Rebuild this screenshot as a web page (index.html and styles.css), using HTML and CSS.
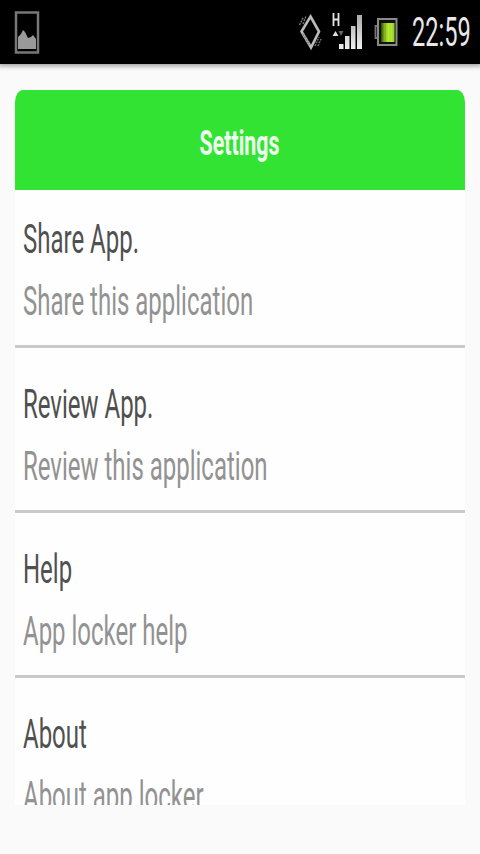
FILE: index.html
```html
<!DOCTYPE html>
<html lang="en">
<head>
<meta charset="utf-8">
<title>Settings</title>
<link rel="stylesheet" href="styles.css">
</head>
<body>
<header class="status">
  <svg class="shot" width="26" height="44" viewBox="0 0 26 44">
    <rect x="2" y="2.500" width="22" height="40" fill="#000" stroke="#777" stroke-width="2.500"/>
    <path d="M4 39V27l3-3 2-4 2 2 3 6 3-1 2-2 3 4v10z" fill="#999"/>
  </svg>
  <svg class="signals" width="112" height="44" viewBox="294 10 112 44">
    <defs>
      <linearGradient id="bar" x2="0" y2="1"><stop offset="0" stop-color="#aaa"/><stop offset="1" stop-color="#f0f0f0"/></linearGradient>
      <linearGradient id="charge"><stop offset="0" stop-color="#2c450c"/><stop offset=".3" stop-color="#91c71b"/><stop offset=".65" stop-color="#c0f53e"/><stop offset="1" stop-color="#8fc81e"/></linearGradient>
    </defs>
    <path d="M310.500 16.500l8.500 15-8 16-9.500-16z" fill="#000" stroke="#bbb" stroke-width="2.600"/>
    <path d="M303 34l7 11" stroke="#888" stroke-width="2.500" stroke-dasharray="2 1"/>
    <path d="M299.500 25l4-8M303 24l3-8M315 46l4-9M318 46l3-7" stroke="#777" stroke-width="1.400" stroke-dasharray="2 1"/>
    <path d="M333.500 13v13M338.500 13v13M334 19.500h4.500" stroke="#e6e6e6" stroke-width="1.800" fill="none"/>
    <path d="M332.500 36l3-5 3 5z" fill="#ddd"/>
    <path d="M338.500 31h5l-2.500 5z" fill="#666"/>
    <path d="M339 44h4.500v5H339zM345 36h4.500v13H345zM351 26h4.500v23H351zM357 15h5v34h-5z" fill="url(#bar)"/>
    <path d="M377.500 26h-2v12h2" fill="none" stroke="#777" stroke-width="1.800"/>
    <rect x="378" y="19" width="18.500" height="26" fill="#111" stroke="#8a8a86" stroke-width="2"/>
    <rect x="381" y="23" width="13.500" height="19" fill="url(#charge)"/>
    <path d="M385.500 23v19M390 23v19" stroke="#597e18" stroke-opacity=".3"/>
  </svg>
  <span class="clock">22:59</span>
</header>
<main class="panel">
  <h1 class="heading"><span>Settings</span></h1>
  <ul class="list">
    <li class="row"><p class="title">Share App.</p><p class="detail">Share this application</p></li>
    <li class="row"><p class="title">Review App.</p><p class="detail">Review this application</p></li>
    <li class="row"><p class="title">Help</p><p class="detail">App locker help</p></li>
    <li class="row"><p class="title">About</p><p class="detail">About app locker</p></li>
  </ul>
</main>
</body>
</html>
```
FILE: styles.css
```css
* { box-sizing: border-box; margin: 0; padding: 0; }
body {
  width: 480px;
  height: 854px;
  overflow: hidden;
  background: #fafafa;
  font-family: Roboto, sans-serif;
}
.status {
  display: flex;
  align-items: flex-start;
  height: 64px;
  padding: 10px 0 0 14px;
  background: #000;
  box-shadow: 0 0 5px 2px #999;
}
.signals { margin-left: 254px; }
.clock {
  flex: none;
  width: 60px;
  margin-left: 6px;
  color: #e8e8e8;
  font-size: 40px;
  line-height: 46px;
  white-space: nowrap;
  transform: scaleX(.59);
  transform-origin: left;
}
.panel {
  display: flex;
  flex-direction: column;
  width: 450px;
  height: 715px;
  margin: 26px auto 0;
  overflow: hidden;
  border-radius: 8px 8px 0 0 / 12px 12px 0 0;
  background: #fefefe;
}
.heading {
  flex: none;
  display: flex;
  align-items: center;
  justify-content: center;
  height: 100px;
  padding: 6px 2px 0 0;
  background: #33e333;
  color: #edffed;
  font-size: 35px;
  font-weight: 700;
}
.heading span { transform: scaleX(.61); }
.list { list-style: none; }
.row {
  height: 165px;
  padding: 25px 8px 0;
  border-bottom: 3px solid #c9c9c9;
}
.row:first-child { height: 158px; padding-top: 18px; }
.title, .detail {
  font-size: 41px;
  line-height: 62px;
  white-space: nowrap;
  transform: scaleX(.585);
  transform-origin: left;
}
.title { color: #505050; }
.detail { color: #929292; }
```
